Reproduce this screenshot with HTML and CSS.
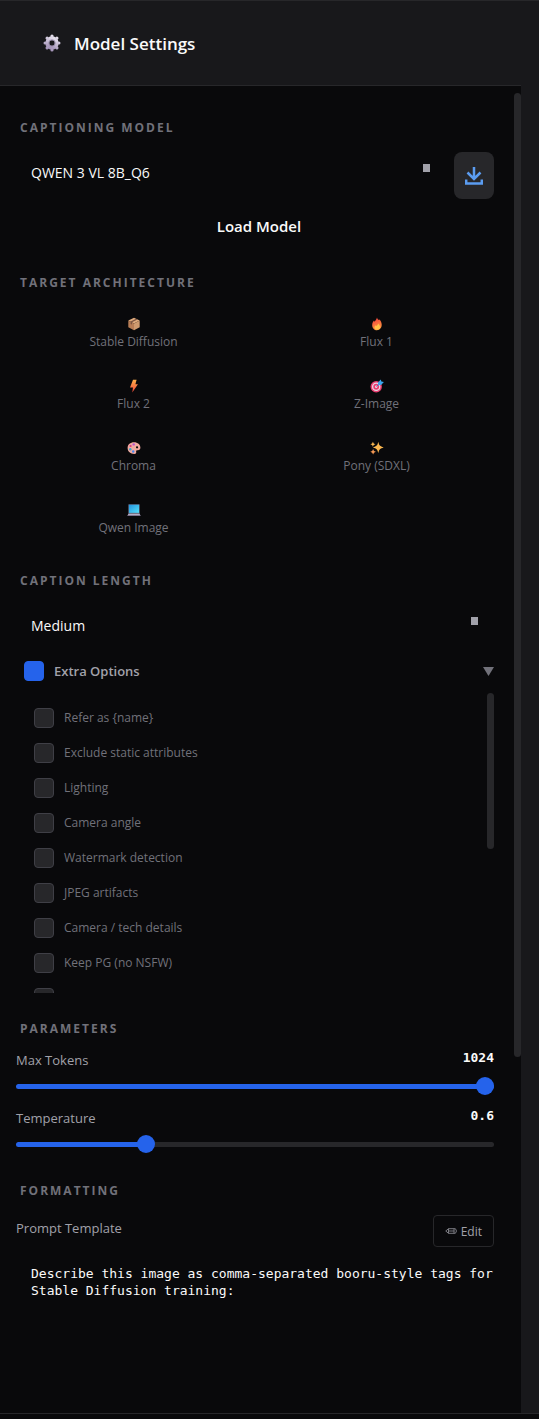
FILE: index.html
```html
<!DOCTYPE html>
<html lang="en">
  <head>
    <meta charset="utf-8">
    <title>Model Settings</title>
    <link rel="stylesheet" href="styles.css">
  </head>
  <body>
    <div class="window">
      <div class="panel">
        <header class="panel-header">
          <svg class="gear" viewBox="0 0 18 18" aria-hidden="true">
            <defs>
              <linearGradient id="gearFill" x1="0.7" y1="0" x2="0.3" y2="1">
                <stop offset="0" stop-color="#e4dfec" />
                <stop offset="1" stop-color="#a393b8" />
              </linearGradient>
            </defs>
            <g fill="none" stroke="url(#gearFill)">
              <circle cx="9" cy="9" r="4.7" stroke-width="4" />
              <path stroke-width="3.2" stroke-linecap="round" d="M9 2.200V2.100M9 15.900V15.800M2.200 9H2.100M15.900 9H15.800M4.200 4.200L4.100 4.100M13.900 13.900L13.800 13.800M4.200 13.800L4.100 13.900M13.900 4.100L13.800 4.200" />
            </g>
            <circle cx="9" cy="9" r="3.200" fill="none" stroke="#8d80a0" stroke-width="0.8" />
          </svg>
          <h1 class="title">Model Settings</h1>
        </header>

        <div class="scroller">
          <main class="content">
            <section class="section">
              <h2 class="section-label">CAPTIONING MODEL</h2>
              <div class="model-row">
                <select class="select" aria-label="Captioning model">
                  <option>QWEN 3 VL 8B_Q6</option>
                </select>
                <button class="download" type="button" aria-label="Download model">
                  <svg viewBox="0 0 18 18" aria-hidden="true">
                    <path d="M9 0v12M2.500 5.500L9 12l6.500-6.500M1.200 12.500v4h15.600v-4" />
                  </svg>
                </button>
              </div>
              <button class="load" type="button">Load Model</button>
            </section>

            <section class="section">
              <h2 class="section-label">TARGET ARCHITECTURE</h2>
              <div class="arch-grid">
                <button class="arch" type="button">
                  <svg viewBox="0 0 14 14" aria-hidden="true">
                    <path fill="#dfab7d" d="M7 .8l5.700 2.600L7 6.500 1.300 3.400z" />
                    <path fill="#b97e56" d="M1.300 3.400L7 6.500V13.200l-5.700-2.900z" />
                    <path fill="#cf9b6f" d="M12.700 3.400L7 6.500V13.200l5.700-2.900z" />
                    <path fill="#7d5642" d="M10.400 2.400L9 1.700 3.600 4.600v2.300l1.400.7V5.300z" />
                  </svg>
                  <span>Stable Diffusion</span>
                </button>
                <button class="arch" type="button">
                  <svg viewBox="0 0 14 14" aria-hidden="true">
                    <defs>
                      <linearGradient id="flame" x1="0.3" y1="0" x2="0.6" y2="1">
                        <stop offset="0.2" stop-color="#f4503c" />
                        <stop offset="1" stop-color="#ffa040" />
                      </linearGradient>
                    </defs>
                    <path fill="url(#flame)" d="M7 .5c.3 1.400 1.300 2.200 2.200 2.800l.2-1c1.400 1.500 2.300 3.500 2.300 5.500 0 3.100-2 5.400-4.700 5.400S2.200 11.100 2.200 8.200c0-1.900.7-3.500 1.800-4.700l.6 1.200C5.600 3.700 6.500 2.100 7 .5z" />
                    <path fill="#ffc247" d="M8 6.500c1.500 1.200 2.300 2.500 2.100 4-.2 1.400-1.500 2.200-3 2.200S4.500 11.700 4.500 10.500c0-1 .6-1.700 1.300-2.200l.6.7C7.300 8.400 8 7.500 8 6.500z" />
                  </svg>
                  <span>Flux 1</span>
                </button>
                <button class="arch" type="button">
                  <svg viewBox="0 0 14 14" aria-hidden="true">
                    <defs>
                      <linearGradient id="bolt" x1="0" y1="0" x2="0" y2="1">
                        <stop offset="0" stop-color="#ffb04a" />
                        <stop offset="1" stop-color="#f04438" />
                      </linearGradient>
                    </defs>
                    <path fill="url(#bolt)" d="M6 .8h3.600L8.400 5.300h2.500L5.300 13.500l.7-5H3z" />
                  </svg>
                  <span>Flux 2</span>
                </button>
                <button class="arch" type="button">
                  <svg viewBox="0 0 14 14" aria-hidden="true">
                    <circle cx="6.200" cy="7.700" r="5.700" fill="#e83e70" />
                    <circle cx="6.200" cy="7.700" r="3.600" fill="none" stroke="#e6d6e4" stroke-width="1.300" />
                    <circle cx="6.200" cy="7.700" r="1.200" fill="#f3d7e4" />
                    <path d="M6.500 7.500L10 4" stroke="#4b6fc4" stroke-width="1" />
                    <path fill="#3aa7ee" d="M8 3.400L10.800.4l.6 2 2.500.6-2.800 3-3.100.2z" />
                  </svg>
                  <span>Z-Image</span>
                </button>
                <button class="arch" type="button">
                  <svg viewBox="0 0 14 14" aria-hidden="true">
                    <path fill="#f2aaa0" fill-rule="evenodd" d="M7 1.300c3.700 0 6.400 2.300 6.400 5.200 0 1.800-1.100 2.900-2.700 2.800-1.300-.1-1.800.6-1.500 1.700.3 1.200-.5 1.900-1.900 1.900C3.600 12.900.6 10.500.6 7S3.400 1.300 7 1.300zM10 5.200a1.100 1.100 0 1 0 .1 2.200 1.100 1.100 0 0 0-.1-2.200z" />
                    <circle cx="6.700" cy="3.400" r="1.200" fill="#b155cf" />
                    <circle cx="3.600" cy="5" r="1.100" fill="#d9397e" />
                    <circle cx="3.300" cy="8.200" r="1.200" fill="#3da5c9" />
                    <circle cx="6.200" cy="10.500" r="1.200" fill="#4787ee" />
                  </svg>
                  <span>Chroma</span>
                </button>
                <button class="arch" type="button">
                  <svg viewBox="0 0 14 14" aria-hidden="true">
                    <g fill="#fbb74f">
                      <path d="M8.300.8c.8 3.700 1.700 4.600 5.400 5.600-3.700 1-4.600 1.900-5.400 5.700-.8-3.800-1.700-4.700-5.400-5.700 3.700-1 4.600-1.900 5.400-5.600z" />
                      <path d="M2.900.8l.8 1.700 1.700.8-1.700.8-.8 1.700-.8-1.700L.4 3.300l1.700-.8z" />
                      <path fill="#f79a55" d="M3.100 8l.9 1.900 1.900.9-1.900.9-.9 1.900-.9-1.900-1.900-.9 1.900-.9z" />
                    </g>
                  </svg>
                  <span>Pony (SDXL)</span>
                </button>
                <button class="arch" type="button">
                  <svg viewBox="0 0 14 14" aria-hidden="true">
                    <defs>
                      <linearGradient id="screen" x1="0" y1="0" x2="1" y2="1">
                        <stop offset="0" stop-color="#2595df" />
                        <stop offset="1" stop-color="#54e0fa" />
                      </linearGradient>
                    </defs>
                    <rect x="1.300" y="1.200" width="11.400" height="9.300" rx="0.600" fill="#596782" />
                    <rect x="2" y="1.800" width="10" height="8" fill="url(#screen)" />
                    <path fill="#b6aec4" d="M1.500 10.500h11l1 2.200H.5z" />
                    <path fill="#776d8b" d="M.5 12.300h13v.7H.5z" />
                  </svg>
                  <span>Qwen Image</span>
                </button>
              </div>
            </section>

            <section class="section">
              <h2 class="section-label">CAPTION LENGTH</h2>
              <select class="select" aria-label="Caption length">
                <option>Medium</option>
              </select>
              <div class="extra-row">
                <label class="check extra"><input type="checkbox" checked>Extra Options</label>
                <button class="toggle" type="button" aria-label="Collapse extra options">
                  <svg viewBox="0 0 11 9" aria-hidden="true"><path d="M0 0h11L5.500 9z" /></svg>
                </button>
              </div>
              <div class="options">
                <div class="options-list">
                  <label class="check"><input type="checkbox">Refer as {name}</label>
                  <label class="check"><input type="checkbox">Exclude static attributes</label>
                  <label class="check"><input type="checkbox">Lighting</label>
                  <label class="check"><input type="checkbox">Camera angle</label>
                  <label class="check"><input type="checkbox">Watermark detection</label>
                  <label class="check"><input type="checkbox">JPEG artifacts</label>
                  <label class="check"><input type="checkbox">Camera / tech details</label>
                  <label class="check"><input type="checkbox">Keep PG (no NSFW)</label>
                  <label class="check"><input type="checkbox" aria-label="More"></label>
                </div>
                <div class="rail"><div class="thumb options-thumb"></div></div>
              </div>
            </section>

            <section class="section">
              <h2 class="section-label tight">PARAMETERS</h2>
              <div class="param">
                <div class="param-head">
                  <label for="tokens">Max Tokens</label>
                  <output class="value" for="tokens">1024</output>
                </div>
                <input class="slider" id="tokens" type="range" min="64" max="1024" value="1024" style="--fill: 100%">
              </div>
              <div class="param">
                <div class="param-head">
                  <label for="temperature">Temperature</label>
                  <output class="value" for="temperature">0.6</output>
                </div>
                <input class="slider" id="temperature" type="range" min="0.1" max="2" step="0.1" value="0.6" style="--fill: 27%">
              </div>
            </section>

            <section class="section formatting">
              <h2 class="section-label">FORMATTING</h2>
              <div class="template-row">
                <label for="template">Prompt Template</label>
                <button class="edit" type="button">
                  <svg viewBox="0 0 13 8" aria-hidden="true">
                    <path d="M.8 4l3-2.500h7c2 0 2 5 0 5h-7zM3.800 1.500v5M4 4h6M9.800 1.500v5" />
                  </svg>
                  Edit
                </button>
              </div>
              <textarea class="template" id="template" spellcheck="false">Describe this image as comma-separated booru-style tags for Stable Diffusion training:</textarea>
            </section>
          </main>
          <div class="rail page-rail"><div class="thumb page-thumb"></div></div>
        </div>
      </div>
      <div class="gutter"></div>
    </div>
  </body>
</html>
```
FILE: styles.css
```css
* {
  box-sizing: border-box;
}
body {
  margin: 0;
  min-height: 100vh;
  padding-bottom: 5px;
  display: flex;
  background: #09090b;
  color: #fafafa;
  font-family: "Open Sans", "Noto Sans", sans-serif;
  font-size: 13px;
}
button,
select,
textarea {
  font-family: inherit;
  color: inherit;
  background: none;
  border: none;
  margin: 0;
  padding: 0;
}
button {
  cursor: pointer;
}
.window {
  flex: 1;
  display: flex;
  min-width: 0;
  border-top: 1px solid #27272a;
  border-bottom: 1px solid #27272a;
}
.panel {
  flex: 1;
  min-width: 0;
  display: flex;
  flex-direction: column;
}
.gutter {
  width: 18px;
  background: #18181b;
}
.panel-header {
  display: flex;
  align-items: center;
  gap: 13px;
  height: 85px;
  padding: 0 43px;
  background: #18181b;
  border-bottom: 1px solid #27272a;
}
.gear {
  width: 18px;
  height: 18px;
}
.title {
  margin: 0;
  font-size: 17px;
  font-weight: 600;
}
.scroller {
  flex: 1;
  display: flex;
}
.content {
  flex: 1;
  min-width: 0;
  display: flex;
  flex-direction: column;
  gap: 28px;
  padding: 34px 20px 16px 16px;
}

/* scrollbars */
.rail {
  width: 7px;
}
.thumb {
  background: #27272a;
  border-radius: 4px;
}
.page-rail {
  padding-top: 7px;
}
.page-thumb {
  height: 73%;
}
.options-thumb {
  height: 52%;
}

.section-label {
  margin: 0 4px 16px;
  font-size: 12px;
  line-height: 16px;
  font-weight: 700;
  letter-spacing: 2px;
  color: #71717a;
}
.section-label.tight {
  margin-bottom: 12px;
}

/* model select */
.model-row {
  display: flex;
  align-items: flex-start;
  gap: 8px;
}
.select {
  display: block;
  width: 100%;
  height: 42px;
  padding: 0 36px 2px 15px;
  appearance: none;
  font-size: 14px;
  background: linear-gradient(#a1a1aa, #a1a1aa) no-repeat right 16px top 12px / 7px 8px;
}
.select option {
  background: #18181b;
}
.download {
  flex: none;
  display: flex;
  align-items: center;
  justify-content: center;
  width: 40px;
  height: 47px;
  border-radius: 8px;
  background: #27272a;
}
.download svg {
  width: 18px;
  height: 18px;
  fill: none;
  stroke: #5b9cf0;
  stroke-width: 2.5;
}
.load {
  display: block;
  width: 100%;
  height: 40px;
  margin-top: 8px;
  padding: 0 0 2px 8px;
  font-size: 15px;
  font-weight: 600;
}

/* architecture tiles */
.arch-grid {
  display: grid;
  grid-template-columns: 1fr 1fr;
  gap: 10px 8px;
}
.arch {
  display: flex;
  flex-direction: column;
  align-items: center;
  padding: 10px 8px 6px;
  font-size: 12px;
  line-height: 22px;
  color: #71717a;
}
.arch svg {
  width: 14px;
  height: 14px;
}

/* extra options */
.extra-row {
  display: flex;
  align-items: center;
  justify-content: space-between;
  height: 24px;
  margin: 12px 0 10px;
  padding-left: 8px;
}
.check {
  display: flex;
  align-items: center;
  gap: 10px;
  font-size: 12px;
  line-height: 20px;
  color: #71717a;
}
.check input {
  flex: none;
  appearance: none;
  width: 20px;
  height: 20px;
  margin: 0;
  border: 1px solid #3f3f46;
  border-radius: 4px;
  background: #27272a;
}
.check input:checked {
  background: #2563eb;
  border-color: #2563eb;
}
.check.extra {
  font-size: 13px;
  font-weight: 600;
  color: #a1a1aa;
}
.toggle {
  display: flex;
}
.toggle svg {
  width: 11px;
  height: 9px;
  fill: #71717a;
}
.options {
  display: flex;
  height: 300px;
}
.options-list {
  flex: 1;
  display: flex;
  flex-direction: column;
  gap: 15px;
  padding: 15px 18px;
  overflow: hidden;
}

/* sliders */
.param + .param {
  margin-top: 12px;
}
.param-head {
  display: flex;
  justify-content: space-between;
  line-height: 22px;
  color: #a1a1aa;
}
.value {
  font-family: "DejaVu Sans Mono", monospace;
  font-weight: 700;
  line-height: 18px;
  color: #fafafa;
}
.slider {
  display: block;
  appearance: none;
  width: 100%;
  height: 18px;
  margin: 6px 0 0;
  background: none;
}
.slider::-webkit-slider-runnable-track {
  height: 5px;
  border-radius: 3px;
  background: linear-gradient(to right, #2563eb var(--fill), #27272a var(--fill));
}
.slider::-webkit-slider-thumb {
  appearance: none;
  width: 18px;
  height: 18px;
  margin-top: -7px;
  border-radius: 50%;
  background: #2563eb;
}

/* prompt template */
.formatting {
  flex: 1;
  display: flex;
  flex-direction: column;
  padding-top: 2px;
}
.template-row {
  display: flex;
  align-items: flex-start;
  justify-content: space-between;
  line-height: 26px;
  color: #a1a1aa;
}
.edit {
  display: flex;
  align-items: center;
  gap: 4px;
  height: 32px;
  padding: 0 11px;
  border: 1px solid #27272a;
  border-radius: 4px;
  font-size: 12px;
}
.edit svg {
  width: 12px;
  height: 8px;
  fill: none;
  stroke: #85858d;
  stroke-width: 1;
}
.template {
  flex: 1;
  width: 100%;
  min-height: 120px;
  margin-top: 8px;
  padding: 10px 0 10px 15px;
  resize: none;
  outline: none;
  overflow: hidden;
  font-family: "DejaVu Sans Mono", monospace;
  font-size: 13px;
  line-height: 17px;
}
```
